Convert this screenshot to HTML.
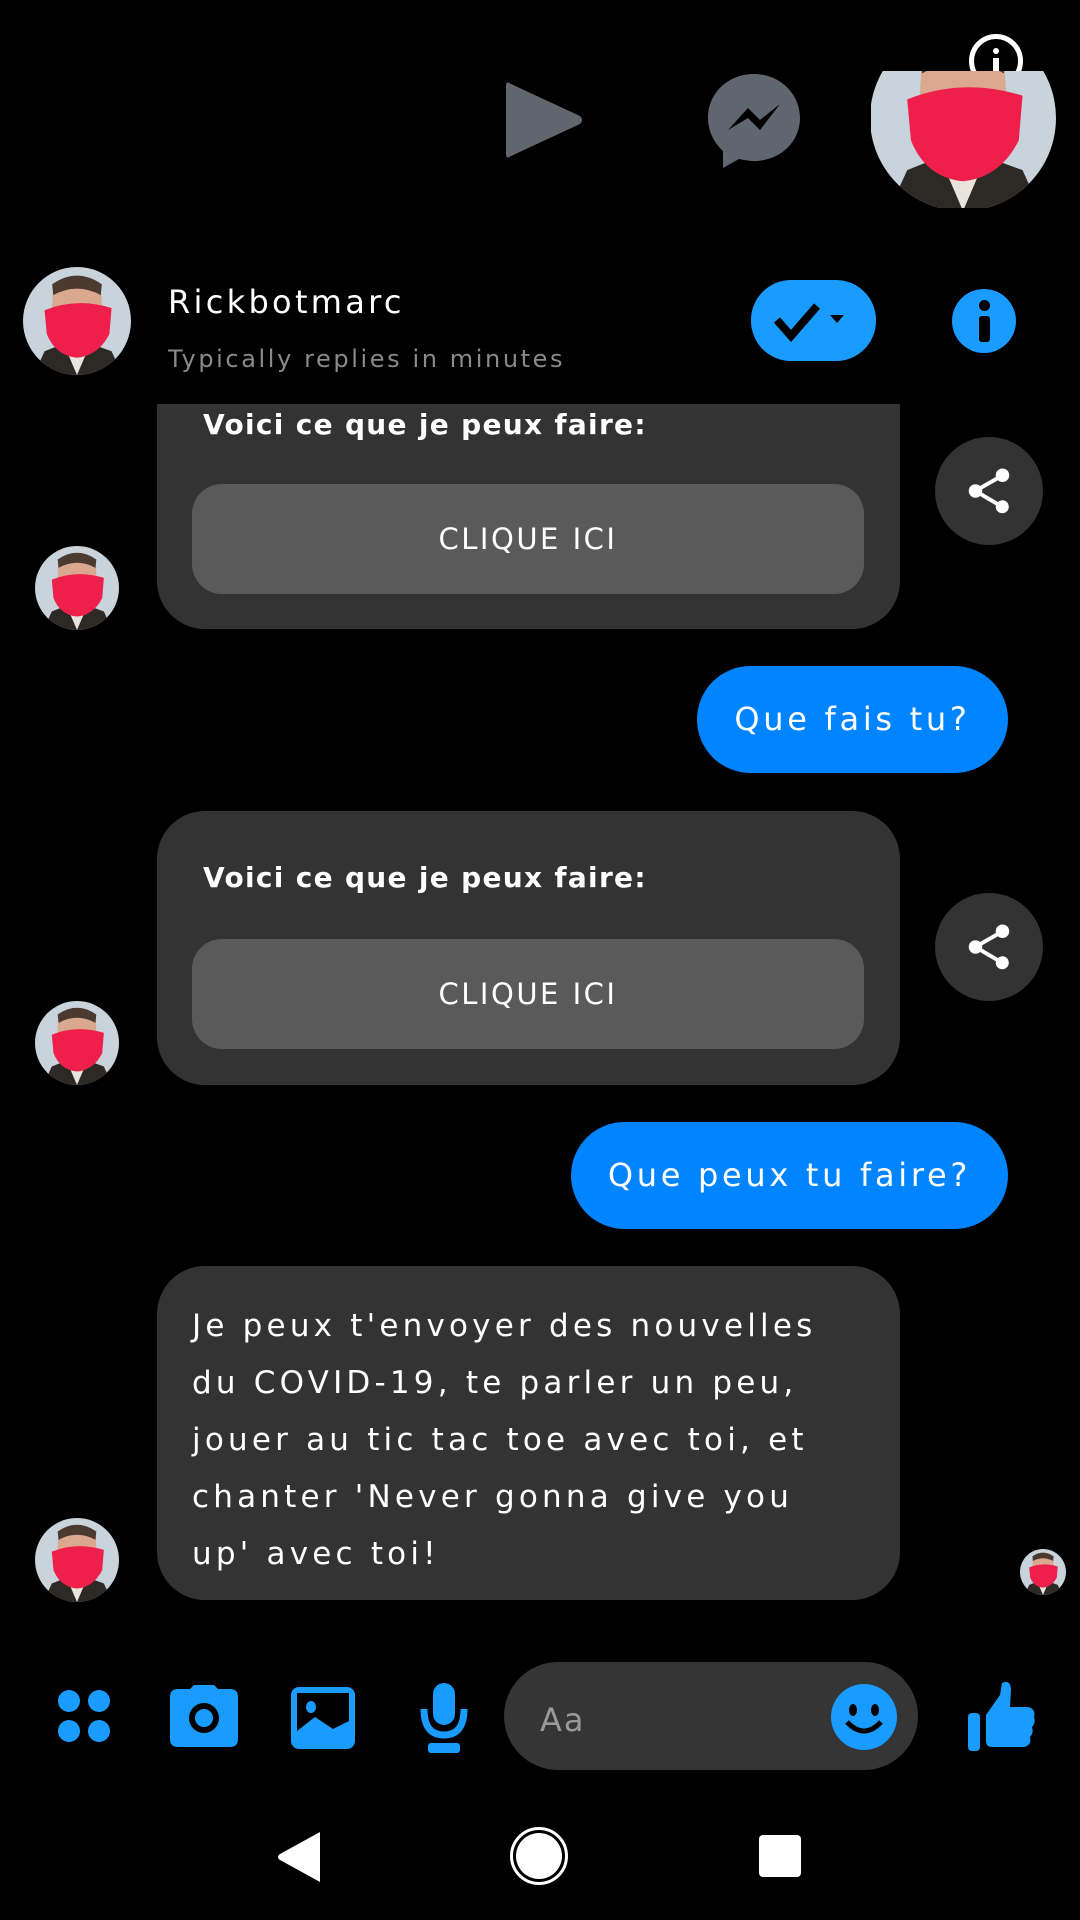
<!DOCTYPE html>
<html><head><meta charset="utf-8"><style>
*{margin:0;padding:0;box-sizing:border-box}
body{width:1080px;height:1920px;background:#000;position:relative;overflow:hidden;font-family:"DejaVu Sans","Liberation Sans",sans-serif;color:#fff}
.a{position:absolute}
.bub{position:absolute;left:157px;width:743px;background:#333;border-radius:48px}
.btn{position:absolute;left:35px;width:672px;height:110px;background:#5a5a5a;border-radius:30px;text-align:center;line-height:110px;font-size:29px;letter-spacing:2.5px}
.vt{position:absolute;left:46px;font-size:28px;font-weight:bold;white-space:nowrap;letter-spacing:1.3px}
.share{position:absolute;left:935px;width:108px;height:108px;border-radius:50%;background:#333}
.blue{position:absolute;background:#0084ff;border-radius:54px;height:107px;line-height:107px;font-size:32px;text-align:center;letter-spacing:3.7px;white-space:nowrap}
.line{position:absolute;left:35px;font-size:31px;letter-spacing:4.2px;white-space:nowrap}
</style></head><body>
<svg width="0" height="0" style="position:absolute"><defs>
<clipPath id="cc" clipPathUnits="objectBoundingBox"><circle cx=".5" cy=".5" r=".5"/></clipPath>
<symbol id="av" viewBox="0 0 100 100"><g clip-path="url(#cc)">
<rect width="100" height="100" fill="#c9d3dc"/>
<path d="M10 100 L20 78 L40 70 L60 70 L82 78 L92 100Z" fill="#2d2a25"/>
<path d="M38 72 L50 100 L62 72Z" fill="#e8e4dc"/>
<path d="M28 18 Q50 2 72 18 L74 50 Q50 62 26 50Z" fill="#d9a88e"/>
<path d="M27 16 Q50 0 73 16 L72 26 Q50 14 28 26Z" fill="#4a3a30"/>
<path d="M20 40 Q50 28 82 38 L80 62 Q70 82 50 84 Q30 82 22 62Z" fill="#ee1f4a"/>
</g></symbol>
<symbol id="sh" viewBox="0 0 24 24"><path fill="#fff" d="M18 16.1c-.8 0-1.4.3-2 .8l-7.1-4.2c.1-.2.1-.5.1-.7s0-.5-.1-.7L16 7.2c.5.5 1.2.8 2 .8 1.7 0 3-1.3 3-3s-1.3-3-3-3-3 1.3-3 3c0 .2 0 .5.1.7L8 9.8C7.5 9.3 6.8 9 6 9c-1.7 0-3 1.3-3 3s1.3 3 3 3c.8 0 1.5-.3 2-.8l7.1 4.2c-.1.2-.1.4-.1.6 0 1.6 1.3 2.9 2.9 2.9s2.9-1.3 2.9-2.9-1.2-2.9-2.8-2.9z"/></symbol>
</defs></svg>

<!-- top area -->
<div class="a" style="left:969px;top:34px;width:54px;height:54px;border:5px solid #fff;border-radius:50%"></div>
<div class="a" style="left:993px;top:48px;width:6px;height:6px;border-radius:50%;background:#fff"></div>
<div class="a" style="left:993px;top:58px;width:6px;height:16px;background:#fff"></div>
<svg class="a" style="left:502px;top:80px" width="82" height="80" viewBox="0 0 82 80"><path d="M4 6 Q4 0 9 4 L78 36 Q82 40 78 44 L9 76 Q4 80 4 74Z" fill="#5f6670"/></svg>
<svg class="a" style="left:706px;top:72px" width="96" height="96" viewBox="0 0 96 96"><path d="M48 2C22 2 2 21 2 46c0 13 6 25 15 33v17l16-9c5 1 10 2 15 2 26 0 46-19 46-43S74 2 48 2z" fill="#5f6670"/><path d="M22 58 L42 36 L54 48 L74 32 L54 58 L42 46Z" fill="#000"/></svg>
<div class="a" style="left:871px;top:71px;width:185px;height:137px;overflow:hidden"><svg style="position:absolute;left:-1px;top:-46px" width="186" height="186"><use href="#av"/></svg></div>

<!-- header -->
<svg class="a" style="left:23px;top:267px" width="108" height="108"><use href="#av"/></svg>
<div class="a" style="left:168px;top:283px;font-size:32px;letter-spacing:3.3px">Rickbotmarc</div>
<div class="a" style="left:168px;top:345px;font-size:24px;color:#8a8a8a;letter-spacing:2.6px">Typically replies in minutes</div>
<div class="a" style="left:751px;top:280px;width:125px;height:81px;border-radius:40px;background:#1a9cff"></div>
<svg class="a" style="left:751px;top:280px" width="125" height="81"><path d="M26 40 L40 56 L66 26" stroke="#000" stroke-width="8" fill="none"/><path d="M79 35 L93 35 L86 43Z" fill="#000"/></svg>
<div class="a" style="left:952px;top:289px;width:64px;height:64px;border-radius:50%;background:#1a9cff"></div>
<div class="a" style="left:979px;top:300px;width:11px;height:11px;border-radius:50%;background:#000"></div>
<div class="a" style="left:979px;top:316px;width:11px;height:26px;border-radius:3px;background:#000"></div>

<!-- bubble 1 -->
<div class="bub" style="top:404px;height:225px;border-radius:0 0 48px 48px">
<div class="vt" style="top:4px">Voici ce que je peux faire:</div>
<div class="btn" style="top:80px">CLIQUE ICI</div></div>
<div class="share" style="top:437px"><svg style="margin:27px" width="54" height="54"><use href="#sh"/></svg></div>
<svg class="a" style="left:35px;top:546px" width="84" height="84"><use href="#av"/></svg>

<div class="blue" style="left:697px;top:666px;width:311px">Que fais tu?</div>

<!-- bubble 2 -->
<div class="bub" style="top:811px;height:274px">
<div class="vt" style="top:50px">Voici ce que je peux faire:</div>
<div class="btn" style="top:128px">CLIQUE ICI</div></div>
<div class="share" style="top:893px"><svg style="margin:27px" width="54" height="54"><use href="#sh"/></svg></div>
<svg class="a" style="left:35px;top:1001px" width="84" height="84"><use href="#av"/></svg>

<div class="blue" style="left:571px;top:1122px;width:437px">Que peux tu faire?</div>

<!-- bubble 3 -->
<div class="bub" style="top:1266px;height:334px">
<div class="line" style="top:42px">Je peux t'envoyer des nouvelles</div>
<div class="line" style="top:99px">du COVID-19, te parler un peu,</div>
<div class="line" style="top:156px">jouer au tic tac toe avec toi, et</div>
<div class="line" style="top:213px">chanter 'Never gonna give you</div>
<div class="line" style="top:270px">up' avec toi!</div>
</div>
<svg class="a" style="left:35px;top:1518px" width="84" height="84"><use href="#av"/></svg>
<svg class="a" style="left:1020px;top:1549px" width="46" height="46"><use href="#av"/></svg>

<!-- composer -->
<svg class="a" style="left:56px;top:1688px" width="56" height="56" viewBox="0 0 56 56" fill="#1a9cff"><circle cx="13" cy="13" r="11"/><circle cx="43" cy="13" r="11"/><circle cx="13" cy="43" r="11"/><circle cx="43" cy="43" r="11"/></svg>
<svg class="a" style="left:170px;top:1685px" width="68" height="62" viewBox="0 0 68 62"><path d="M20 4 L24 0 L44 0 L48 4 L60 4 Q68 4 68 12 L68 54 Q68 62 60 62 L8 62 Q0 62 0 54 L0 12 Q0 4 8 4Z" fill="#1a9cff"/><circle cx="34" cy="33" r="15" fill="#000"/><circle cx="34" cy="33" r="9" fill="#1a9cff"/></svg>
<svg class="a" style="left:291px;top:1687px" width="64" height="62" viewBox="0 0 64 62"><rect width="64" height="62" rx="8" fill="#1a9cff"/><rect x="6" y="6" width="52" height="50" fill="#000"/><path d="M6 56 L6 44 L24 30 L42 42 L58 34 L58 56Z" fill="#1a9cff"/><ellipse cx="20" cy="20" rx="5" ry="6" fill="#1a9cff"/></svg>
<svg class="a" style="left:420px;top:1683px" width="48" height="70" viewBox="0 0 48 70"><rect x="13" y="0" width="22" height="42" rx="11" fill="#1a9cff"/><path d="M4 26 Q4 52 24 52 Q44 52 44 26" stroke="#1a9cff" stroke-width="7" fill="none"/><rect x="8" y="60" width="32" height="10" rx="3" fill="#1a9cff"/></svg>
<div class="a" style="left:504px;top:1662px;width:414px;height:108px;border-radius:54px;background:#353535"></div>
<div class="a" style="left:540px;top:1701px;font-size:32px;color:#9a9a9a;letter-spacing:2px">Aa</div>
<svg class="a" style="left:831px;top:1684px" width="66" height="66" viewBox="0 0 66 66"><circle cx="33" cy="33" r="33" fill="#1a9cff"/><ellipse cx="22" cy="26" rx="4" ry="6" fill="#000"/><ellipse cx="44" cy="26" rx="4" ry="6" fill="#000"/><path d="M16 38 Q33 56 50 38" stroke="#000" stroke-width="5" fill="none"/></svg>
<svg class="a" style="left:968px;top:1681px" width="68" height="70" viewBox="0 0 68 70"><rect x="0" y="32" width="12" height="38" rx="4" fill="#1a9cff"/><path d="M18 34 L32 14 L34 2 Q42 -2 43 8 L42 26 L60 26 Q68 28 66 36 Q68 42 64 46 Q66 52 62 56 Q64 64 56 66 L24 66 Q18 66 18 60Z" fill="#1a9cff"/></svg>

<!-- nav -->
<svg class="a" style="left:276px;top:1830px" width="46" height="54" viewBox="0 0 46 54"><path d="M44 2 L44 52 L4 30 Q0 27 4 24Z" fill="#fff"/></svg>
<div class="a" style="left:510px;top:1827px;width:58px;height:58px;border-radius:50%;border:3px solid #fff"></div>
<div class="a" style="left:516px;top:1833px;width:46px;height:46px;border-radius:50%;background:#fff"></div>
<div class="a" style="left:759px;top:1835px;width:42px;height:42px;border-radius:4px;background:#fff"></div>
</body></html>
